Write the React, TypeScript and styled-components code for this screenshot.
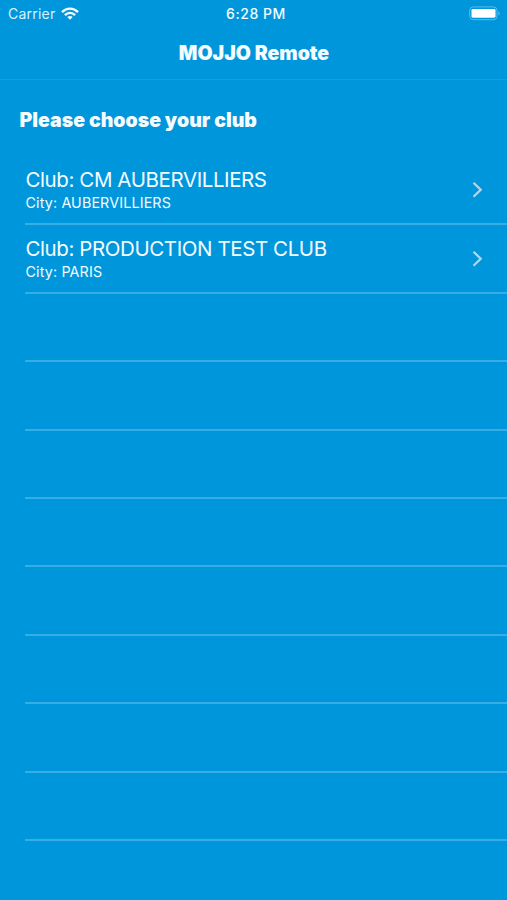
import React from "react";
import styled, { createGlobalStyle } from "styled-components";

const GlobalStyle = createGlobalStyle`
  * { box-sizing: border-box; }
  body { margin: 0; background: #0096dc; }
`;

const Screen = styled.main`
  width: 507px;
  height: 900px;
  overflow: hidden;
  background: #0096dc;
  color: #f4fcff;
  font-family: Inter, "Liberation Sans", sans-serif;
`;

const StatusBar = styled.header`
  display: grid;
  grid-template-columns: 1fr auto 1fr;
  align-items: center;
  height: 27px;
  padding: 0 6px 0 8px;
`;

const Carrier = styled.div`
  display: flex;
  align-items: center;
  gap: 6px;
  font-size: 14px;
  line-height: 27px;
  letter-spacing: 0.22px;
  color: #d8f3fe;
`;

const Clock = styled.time`
  padding-left: 3px;
  font-size: 14px;
  line-height: 27px;
  font-weight: 500;
  letter-spacing: 0.55px;
`;

const Battery = styled.svg`
  justify-self: end;
`;

const NavBar = styled.div`
  display: flex;
  justify-content: center;
  height: 53px;
  border-bottom: 1px solid #149fe0;
`;

const Title = styled.h1`
  margin: 0;
  padding-left: 1px;
  font-size: 19.5px;
  line-height: 53px;
  font-weight: 900;
  letter-spacing: -0.03px;
`;

const Prompt = styled.h2`
  margin: 0;
  height: 77px;
  padding-left: 19.5px;
  font-size: 19.5px;
  line-height: 81px;
  font-weight: 900;
  letter-spacing: 0px;
`;

const ClubList = styled.ul`
  margin: 0;
  padding: 0 0 0 25px;
  list-style: none;
`;

const Row = styled.li`
  display: flex;
  justify-content: space-between;
  align-items: center;
  height: 68.4px;
  padding-right: 24px;
  border-bottom: 2px solid #38ade5;
`;

const ClubText = styled.div`
  display: flex;
  flex-direction: column;
  padding-left: 0.5px;
`;

const ClubName = styled.span`
  font-size: 20.5px;
  line-height: 26px;
  letter-spacing: -0.41px;
`;

const City = styled.span`
  font-size: 14.3px;
  line-height: 20px;
  letter-spacing: 0.14px;
`;

const clubs = [
  { name: "CM AUBERVILLIERS", city: "AUBERVILLIERS" },
  { name: "PRODUCTION TEST CLUB", city: "PARIS" },
];

const EMPTY_ROWS = 8;

function WifiIcon() {
  return (
    <svg width="18" height="13" viewBox="0 0 18 13" fill="none" stroke="#f4fcff" strokeWidth="2.4">
      <path d="M1 5.1C5.5 0.4 12.5 0.4 17 5.1" />
      <path d="M3.9 8.1C6.8 5.1 11.2 5.1 14.1 8.1" />
      <path d="M9 12.7L6.3 10C7.8 8.5 10.2 8.5 11.7 10Z" fill="#f4fcff" stroke="none" />
    </svg>
  );
}

function BatteryIcon() {
  return (
    <Battery width="33" height="15" viewBox="0 0 33 15" fill="none">
      <rect x="1.7" y="0.9" width="27.3" height="12.8" rx="3.6" stroke="#5cbcea" />
      <rect x="3.5" y="2.9" width="24" height="8.8" rx="1.4" fill="#fff" />
      <path d="M30.5 5.2C32.2 5.9 32.2 8.8 30.5 9.5Z" fill="#5cbcea" />
    </Battery>
  );
}

function Chevron() {
  return (
    <svg width="11" height="18" viewBox="0 0 11 18" fill="none" stroke="#b5d6e9" strokeWidth="2.3">
      <path d="M1.5 1.7L8.7 8.7L1.5 15.7" />
    </svg>
  );
}

export default function App() {
  return (
    <Screen>
      <GlobalStyle />
      <StatusBar>
        <Carrier>
          Carrier
          <WifiIcon />
        </Carrier>
        <Clock>6:28 PM</Clock>
        <BatteryIcon />
      </StatusBar>
      <NavBar>
        <Title>MOJJO Remote</Title>
      </NavBar>
      <Prompt>Please choose your club</Prompt>
      <ClubList>
        {clubs.map((club) => (
          <Row key={club.name}>
            <ClubText>
              <ClubName>Club: {club.name}</ClubName>
              <City>City: {club.city}</City>
            </ClubText>
            <Chevron />
          </Row>
        ))}
        {Array.from({ length: EMPTY_ROWS }, (_, i) => (
          <Row key={i} />
        ))}
      </ClubList>
    </Screen>
  );
}
